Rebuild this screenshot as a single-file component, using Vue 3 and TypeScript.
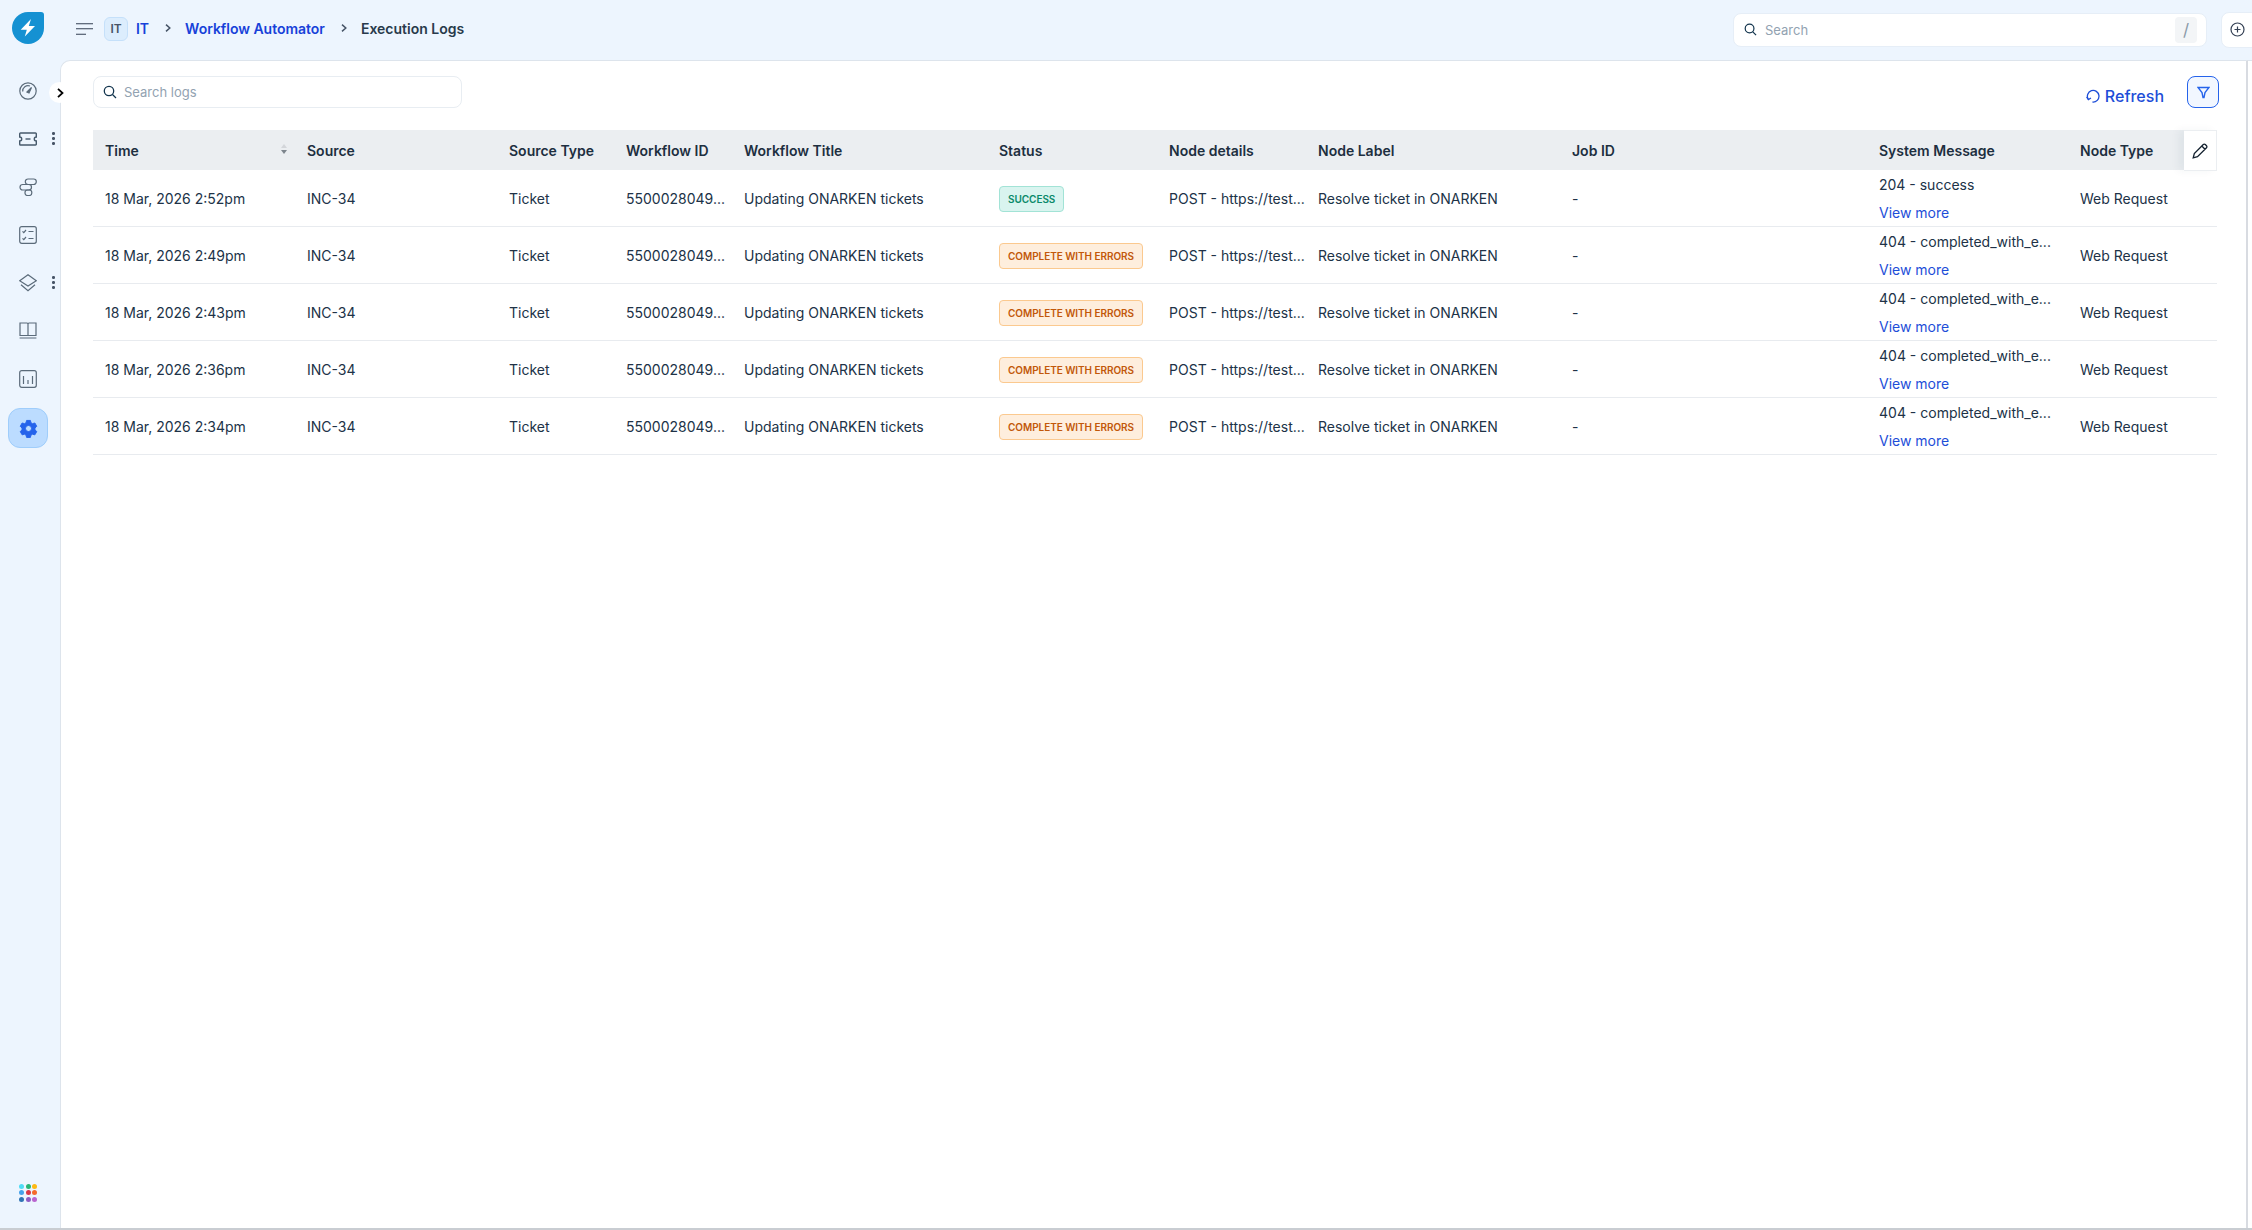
<script setup lang="ts">
interface LogRow {
  time: string
  ok: boolean
  message: string
}

const columns = [
  { label: 'Time', cls: 'c-time' },
  { label: 'Source', cls: 'c-source' },
  { label: 'Source Type', cls: 'c-stype' },
  { label: 'Workflow ID', cls: 'c-wid' },
  { label: 'Workflow Title', cls: 'c-wtitle' },
  { label: 'Status', cls: 'c-status' },
  { label: 'Node details', cls: 'c-details' },
  { label: 'Node Label', cls: 'c-label' },
  { label: 'Job ID', cls: 'c-job' },
  { label: 'System Message', cls: 'c-msg' },
  { label: 'Node Type', cls: 'c-type' },
]

const rows: LogRow[] = [
  { time: '18 Mar, 2026 2:52pm', ok: true, message: '204 - success' },
  { time: '18 Mar, 2026 2:49pm', ok: false, message: '404 - completed_with_e...' },
  { time: '18 Mar, 2026 2:43pm', ok: false, message: '404 - completed_with_e...' },
  { time: '18 Mar, 2026 2:36pm', ok: false, message: '404 - completed_with_e...' },
  { time: '18 Mar, 2026 2:34pm', ok: false, message: '404 - completed_with_e...' },
]

const appDots = ['#4fdcf5', '#27b574', '#fdb913', '#46a3ec', '#d9394a', '#f56a2b', '#2f74b5', '#8e5cc4', '#b964cf']
</script>

<template>
  <div class="shell">
    <header class="topbar">
      <div class="logo-cell">
        <svg width="32" height="32" viewBox="0 0 32 32">
          <path d="M16 0H29a3 3 0 0 1 3 3V16A16 16 0 1 1 16 0Z" fill="#1591d2" />
          <path d="M19 7 8.700 17.800H14.800L12.800 24.500 23 14H16.800Z" fill="#fff" />
        </svg>
      </div>
      <svg class="menu-icon" width="17" height="12" viewBox="0 0 17 12" fill="none" stroke="#344054" stroke-width="1.1">
        <path d="M0 .8H17M0 5.800H17M0 11.300H10" />
      </svg>
      <span class="it-badge">IT</span>
      <nav class="crumbs">
        <a class="crumb-link">IT</a>
        <svg class="crumb-sep" width="6" height="8" viewBox="0 0 6 8" fill="none" stroke="#475467" stroke-width="1.5"><path d="M1 .6 4.800 4 1 7.400" /></svg>
        <a class="crumb-link">Workflow Automator</a>
        <svg class="crumb-sep" width="6" height="8" viewBox="0 0 6 8" fill="none" stroke="#475467" stroke-width="1.5"><path d="M1 .6 4.800 4 1 7.400" /></svg>
        <span class="crumb-current">Execution Logs</span>
      </nav>
      <div class="global-search">
        <svg width="13" height="13" viewBox="0 0 14 14" fill="none" stroke="#12344d" stroke-width="1.3"><circle cx="6" cy="6" r="4.7" /><path d="M9.500 9.500 13 13" /></svg>
        <span class="global-placeholder">Search</span>
        <span class="slash">/</span>
      </div>
      <div class="plus-btn">
        <svg width="15" height="15" viewBox="0 0 15 15" fill="none" stroke="#344054" stroke-width="1.2"><circle cx="7.500" cy="7.500" r="6.500" /><path d="M7.500 4.500v6M4.500 7.500h6" /></svg>
      </div>
    </header>

    <div class="body">
      <aside class="sidebar">
        <div class="nav-list">
          <span class="nav-item">
            <svg width="18" height="18" viewBox="0 0 18 18" fill="none" stroke="#5b6b7a" stroke-width="1.2">
              <circle cx="9" cy="9" r="8.200" /><path d="M3.700 9.500A5.400 5.400 0 0 1 11 4" /><path d="M8 10 12.500 5.500 10 11Z" fill="#5b6b7a" />
            </svg>
          </span>
          <span class="nav-item">
            <svg width="18" height="18" viewBox="0 0 18 18" fill="none" stroke="#475a6c" stroke-width="1.4">
              <path d="M1.500 3h15a.8.8 0 0 1 .8.8V7a2 2 0 0 0 0 4v3.200a.8.8 0 0 1-.8.8h-15a.8.8 0 0 1-.8-.8V11a2 2 0 0 0 0-4V3.800a.8.8 0 0 1 .8-.8Z" /><path d="M6.500 9h5" />
            </svg>
            <i class="kebab"></i>
          </span>
          <span class="nav-item">
            <svg width="18" height="18" viewBox="0 0 18 18" fill="none" stroke="#5b6b7a" stroke-width="1.2">
              <rect x="6.300" y="1" width="11" height="5.500" rx="2.700" /><rect x="1" y="6.500" width="11.500" height="5.500" rx="2.700" /><rect x="6" y="12" width="6.800" height="5.500" rx="2.500" />
            </svg>
          </span>
          <span class="nav-item">
            <svg width="18" height="18" viewBox="0 0 18 18" fill="none" stroke="#5b6b7a" stroke-width="1.2">
              <rect x=".7" y=".7" width="16.600" height="16.600" rx="2" /><path d="M3.500 5.300 4.800 6.600 7 4M3.500 12.300 4.800 13.600 7 11M9.500 5.500h5M9.500 12.500h5" />
            </svg>
          </span>
          <span class="nav-item">
            <svg width="18" height="18" viewBox="0 0 18 18" fill="none" stroke="#5b6b7a" stroke-width="1.2">
              <path d="M9 .8 17.300 6.800 9 12 .7 6.800Z" /><path d="M2 10.800 9 16.800 16 10.800" />
            </svg>
            <i class="kebab"></i>
          </span>
          <span class="nav-item">
            <svg width="18" height="18" viewBox="0 0 18 18" fill="none" stroke="#5b6b7a" stroke-width="1.2">
              <path d="M1 1h7a1 1 0 0 1 1 1v11.500H1ZM17 1h-7a1 1 0 0 0-1 1v11.500h8ZM.6 16h16.800" />
            </svg>
          </span>
          <span class="nav-item">
            <svg width="18" height="18" viewBox="0 0 18 18" fill="none" stroke="#5b6b7a" stroke-width="1.2">
              <rect x=".7" y=".7" width="16.600" height="16.600" rx="2" /><path d="M4.500 6v8M9 10v4M13.500 6v8" />
            </svg>
          </span>
          <span class="nav-active">
            <svg width="19" height="19" viewBox="0 0 20 20">
              <path fill="#2563eb" stroke="#2563eb" stroke-linejoin="round" fill-rule="evenodd" d="M8 1.500h4l.6 2.500 1.600.9 2.500-.7 2 3.500-1.900 1.800v1.900l1.900 1.800-2 3.500-2.500-.7-1.600.9-.6 2.500H8l-.6-2.500-1.600-.9-2.500.7-2-3.500 1.900-1.800V9.500L1.300 7.700l2-3.500 2.500.7 1.600-.9ZM10 6.800a3.200 3.200 0 1 0 0 6.400 3.200 3.200 0 0 0 0-6.400Z" />
            </svg>
          </span>
        </div>
        <div class="app-dots">
          <i v-for="c in appDots" :key="c" :style="{ background: c }"></i>
        </div>
      </aside>

      <main class="panel">
        <span class="collapse-btn">
          <svg width="7" height="10" viewBox="0 0 7 10" fill="none" stroke="#000" stroke-width="1.800"><path d="M1 .8 5.500 5 1 9.200" /></svg>
        </span>
        <div class="toolbar">
          <div class="log-search">
            <svg width="14" height="14" viewBox="0 0 14 14" fill="none" stroke="#12344d" stroke-width="1.3"><circle cx="6" cy="6" r="4.700" /><path d="M9.500 9.500 13 13" /></svg>
            <span class="log-placeholder">Search logs</span>
          </div>
          <div class="actions">
            <a class="refresh">
              <svg width="14" height="14" viewBox="0 0 14 14" fill="none" stroke="#1d4ed8" stroke-width="1.300"><path d="M6.500 13A5.800 5.800 0 1 0 2.200 10.200" /><path d="M.6 8 2.400 10.600 5 9" /></svg>
              Refresh
            </a>
            <span class="filter-btn">
              <svg width="13" height="13" viewBox="0 0 13 13" fill="none" stroke="#2563eb" stroke-width="1.400"><path d="M1 1.500h11L8 6.500 7 11.500H6L5 6.500Z" /></svg>
            </span>
          </div>
        </div>

        <div class="table">
          <div class="row head">
            <div v-for="col in columns" :key="col.label" class="cell" :class="col.cls">
              {{ col.label }}
              <span v-if="col.label === 'Time'" class="sort"><i class="up"></i><i class="down"></i></span>
            </div>
            <div class="edit-cell">
              <svg width="16" height="16" viewBox="0 0 16 16" fill="none" stroke="#12202e" stroke-width="1.300">
                <path d="M1.200 14.800 2.300 10.500 11.300 1.500a1.400 1.400 0 0 1 2 0l1.200 1.200a1.400 1.400 0 0 1 0 2l-9 9ZM9.800 3l3.200 3.200" />
              </svg>
            </div>
          </div>
          <div v-for="r in rows" :key="r.time" class="row">
            <div class="cell c-time">{{ r.time }}</div>
            <div class="cell c-source">INC-34</div>
            <div class="cell c-stype">Ticket</div>
            <div class="cell c-wid">5500028049...</div>
            <div class="cell c-wtitle">Updating ONARKEN tickets</div>
            <div class="cell c-status">
              <span class="tag" :class="r.ok ? 'tag-ok' : 'tag-warn'">{{ r.ok ? 'SUCCESS' : 'COMPLETE WITH ERRORS' }}</span>
            </div>
            <div class="cell c-details">POST - https://test...</div>
            <div class="cell c-label">Resolve ticket in ONARKEN</div>
            <div class="cell c-job">-</div>
            <div class="cell c-msg msg-cell">
              <span>{{ r.message }}</span>
              <a class="view-more">View more</a>
            </div>
            <div class="cell c-type">Web Request</div>
          </div>
        </div>
      </main>
      <div class="gutter"></div>
    </div>
  </div>
</template>

<style>
html,
body {
  margin: 0;
  background: #edf5fe;
}
</style>

<style scoped>
.shell {
  width: 2252px;
  height: 1230px;
  display: flex;
  flex-direction: column;
  overflow: hidden;
  font-family: Inter, "Liberation Sans", sans-serif;
  font-size: 14px;
  color: #203247;
  background: #edf5fe;
  border-bottom: 2px solid #c9cdd2;
  box-sizing: border-box;
}

.topbar {
  height: 60px;
  flex: none;
  display: flex;
  align-items: center;
}

.logo-cell {
  width: 76px;
  flex: none;
  display: flex;
  padding-left: 12px;
  box-sizing: border-box;
  margin-top: -4px;
}

.menu-icon {
  margin-top: -2px;
}

.it-badge {
  width: 24px;
  height: 24px;
  margin: -3px 0 0 11px;
  box-sizing: border-box;
  display: flex;
  align-items: center;
  justify-content: center;
  border: 1px solid #c5e0fa;
  border-radius: 6px;
  background: #dcedfd;
  color: #475467;
  font-size: 12px;
  font-weight: 600;
}

.crumbs {
  display: flex;
  align-items: center;
  margin: -4px 0 0 8px;
  font-size: 14px;
}

.crumb-link {
  color: #1741d9;
  font-weight: 600;
  letter-spacing: -0.02px;
}

.crumb-sep {
  margin: 0 14px 0 16px;
}

.crumb-current {
  color: #283a4b;
  font-weight: 600;
}

.global-search {
  margin-left: auto;
  width: 474px;
  height: 34px;
  margin-top: -1px;
  box-sizing: border-box;
  display: flex;
  align-items: center;
  padding: 0 9px 0 10px;
  background: #fff;
  border: 1px solid #e6eef7;
  border-radius: 8px;
}

.global-placeholder {
  margin-left: 8px;
  color: #92a2b1;
  font-size: 13px;
}

.slash {
  margin-left: auto;
  width: 22px;
  height: 26px;
  display: flex;
  align-items: center;
  justify-content: center;
  background: #f3f5f7;
  border-radius: 4px;
  color: #8a9aa9;
  font-size: 17px;
}

.plus-btn {
  width: 40px;
  height: 36px;
  margin: -1px -9px 0 14px;
  display: flex;
  align-items: center;
  padding-left: 8px;
  box-sizing: border-box;
  background: #fff;
  border: 1px solid #e6eef7;
  border-radius: 8px 0 0 8px;
}

.body {
  flex: 1;
  display: flex;
  min-height: 0;
}

.sidebar {
  width: 60px;
  flex: none;
  display: flex;
  flex-direction: column;
  align-items: center;
  justify-content: space-between;
  padding: 21px 4px 26px 0;
  box-sizing: border-box;
}

.nav-list {
  display: flex;
  flex-direction: column;
  align-items: center;
  gap: 28px;
}

.nav-item {
  position: relative;
  display: flex;
  align-items: center;
  justify-content: center;
  width: 20px;
  height: 20px;
}

.kebab {
  position: absolute;
  left: 34px;
  top: 3px;
  width: 2.500px;
  height: 2.500px;
  background: #475467;
  border-radius: 50%;
  box-shadow: 0 5px 0 #475467, 0 10px 0 #475467;
}

.nav-active {
  width: 40px;
  height: 40px;
  margin-top: -9px;
  box-sizing: border-box;
  display: flex;
  align-items: center;
  justify-content: center;
  background: #bcdcff;
  border: 1px solid #9fcdfb;
  border-radius: 12px;
}

.app-dots {
  display: grid;
  grid-template-columns: repeat(3, 5px);
  gap: 1.670px;
}

.app-dots i {
  width: 5px;
  height: 5px;
  border-radius: 50%;
}

.panel {
  flex: 1;
  position: relative;
  background: #fff;
  border: 1px solid #dde4ec;
  border-width: 1px 2px 0 1px;
  border-right-color: #d8dbe1;
  border-top-left-radius: 10px;
  padding: 15px 27px 0 32px;
  box-sizing: border-box;
  min-width: 0;
}

.gutter {
  width: 4px;
  flex: none;
  background: #fff;
  border-top: 1px solid #dde4ec;
  box-sizing: border-box;
}

.collapse-btn {
  position: absolute;
  left: -12px;
  top: 21px;
  width: 21px;
  height: 21px;
  padding-left: 2px;
  box-sizing: border-box;
  display: flex;
  align-items: center;
  justify-content: center;
  background: #fff;
  border-radius: 50%;
}

.toolbar {
  height: 54px;
  display: flex;
  justify-content: space-between;
  align-items: flex-start;
}

.log-search {
  width: 369px;
  height: 32px;
  box-sizing: border-box;
  display: flex;
  align-items: center;
  gap: 7px;
  padding: 0 9px;
  border: 1px solid #e8edf2;
  border-radius: 8px;
}

.log-placeholder {
  color: #92a2b1;
  font-size: 13px;
}

.actions {
  display: flex;
  align-items: flex-start;
  gap: 23px;
}

.refresh {
  display: flex;
  align-items: center;
  gap: 5px;
  margin-top: 10px;
  color: #1d4ed8;
  font-size: 16px;
  font-weight: 500;
}

.filter-btn {
  width: 32px;
  height: 32px;
  box-sizing: border-box;
  display: flex;
  align-items: center;
  justify-content: center;
  background: #f2f7ff;
  border: 1px solid #2563eb;
  border-radius: 8px;
}

.table {
  margin-right: 2px;
}

.row {
  display: grid;
  grid-template-columns: 202px 202px 117px 118px 255px 170px 149px 254px 307px 201px 149px;
  height: 57px;
  border-bottom: 1px solid #e8ebef;
  box-sizing: border-box;
  position: relative;
}

.head {
  height: 40px;
  background: #ebeef1;
  border-bottom: none;
  font-weight: 600;
  color: #1d2f40;
}

.cell {
  display: flex;
  align-items: center;
  padding-left: 12px;
  white-space: nowrap;
  position: relative;
  min-width: 0;
}

.msg-cell {
  flex-direction: column;
  align-items: flex-start;
  justify-content: center;
  gap: 11px;
}

.view-more {
  color: #1d4ed8;
}

.sort {
  position: absolute;
  right: 8px;
  top: 14px;
  display: flex;
  flex-direction: column;
  gap: 2px;
}

.sort i {
  width: 0;
  height: 0;
  border-left: 3px solid transparent;
  border-right: 3px solid transparent;
}

.sort .up {
  border-bottom: 4px solid #d3d6da;
}

.sort .down {
  border-top: 4px solid #7d858d;
}

.edit-cell {
  position: absolute;
  right: 0;
  top: 0;
  width: 33px;
  height: 41px;
  display: flex;
  align-items: center;
  justify-content: center;
  background: #fff;
  box-shadow: -6px 0 8px rgba(18, 52, 77, 0.05);
  border: 1px solid #ebeef1;
  border-left: none;
  box-sizing: border-box;
}

.tag {
  display: inline-flex;
  align-items: center;
  height: 26px;
  margin-top: 1px;
  padding: 0 8px;
  box-sizing: border-box;
  border-radius: 4px;
  font-size: 10px;
  font-weight: 600;
  letter-spacing: -0.05px;
}

.tag-ok {
  background: #d9f4ef;
  border: 1px solid #a2e3d6;
  color: #0a8a6a;
}

.tag-warn {
  background: #feeedd;
  border: 1px solid #fbc98f;
  color: #c2580a;
}
</style>
